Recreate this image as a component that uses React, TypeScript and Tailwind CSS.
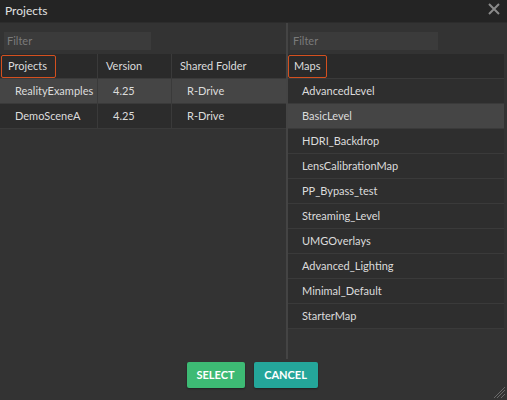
import React from 'react';

const projects = [
  { name: 'RealityExamples', version: '4.25', folder: 'R-Drive', selected: true },
  { name: 'DemoSceneA', version: '4.25', folder: 'R-Drive', selected: false },
];

const maps = [
  'AdvancedLevel',
  'BasicLevel',
  'HDRI_Backdrop',
  'LensCalibrationMap',
  'PP_Bypass_test',
  'Streaming_Level',
  'UMGOverlays',
  'Advanced_Lighting',
  'Minimal_Default',
  'StarterMap',
];

function FilterBox({ width }: { width: string }) {
  return (
    <div className={`${width} h-[18px] bg-[#3b3b3b] flex items-center px-[3px] text-[11px] text-[#7a7a7a]`}>
      Filter
    </div>
  );
}

export default function App() {
  return (
    <div className="w-[507px] h-[400px] bg-[#333333] flex flex-col font-['Lato',sans-serif] text-[11px] text-[#dcdcdc] overflow-hidden">
      {/* title bar */}
      <div className="h-[23px] bg-[#242424] border-b border-[#2c2c2c] flex items-center justify-between pl-[5px] pr-[6px] shrink-0">
        <span className="text-[12px] text-[#e2e2e2]">Projects</span>
        <svg width="14" height="14" viewBox="0 0 14 14" className="mt-[-4px]">
          <path d="M2 2 L12 12 M12 2 L2 12" stroke="#8a8a8a" strokeWidth="2" />
        </svg>
      </div>

      <div className="flex h-[336px] shrink-0">
        {/* projects panel */}
        <div className="w-[288px] border-r-2 border-[#444444] flex flex-col pt-[9px]">
          <div className="pl-[4px]">
            <FilterBox width="w-[147px]" />
          </div>
          <div className="mt-[4px] h-[25px] bg-[#2a2a2a] flex border-b border-[#3a3a3a]">
            <div className="w-[98px] border-r border-[#3a3a3a] flex items-center pl-[1px]">
              <div className="h-[23px] w-[55px] border border-[#d4501f] rounded-[2px] flex items-center pl-[6px]">
                Projects
              </div>
            </div>
            <div className="w-[74px] border-r border-[#3a3a3a] flex items-center pl-[8px]">Version</div>
            <div className="flex-1 flex items-center pl-[8px]">Shared Folder</div>
          </div>
          {projects.map((p) => (
            <div
              key={p.name}
              className={`h-[25px] flex border-b border-[#3a3a3a] ${p.selected ? 'bg-[#454545]' : 'bg-[#2c2c2c]'}`}
            >
              <div className="w-[98px] border-r border-[#3a3a3a] flex items-center pl-[15px]">{p.name}</div>
              <div className="w-[74px] border-r border-[#3a3a3a] flex items-center pl-[15px]">{p.version}</div>
              <div className="flex-1 flex items-center pl-[15px]">{p.folder}</div>
            </div>
          ))}
        </div>

        {/* maps panel */}
        <div className="flex-1 flex flex-col pt-[9px] pr-[3px]">
          <div className="pl-[2px]">
            <FilterBox width="w-[148px]" />
          </div>
          <div className="mt-[4px] h-[25px] bg-[#2a2a2a] flex items-center border-b border-[#3a3a3a]">
            <div className="h-[23px] w-[39px] border border-[#d4501f] rounded-[2px] flex items-center pl-[5px]">
              Maps
            </div>
          </div>
          {maps.map((m) => (
            <div
              key={m}
              className={`h-[25px] flex items-center pl-[14px] border-b border-[#3a3a3a] ${m === 'BasicLevel' ? 'bg-[#454545]' : 'bg-[#2e2e2e]'}`}
            >
              {m}
            </div>
          ))}
        </div>
      </div>

      {/* footer */}
      <div className="flex-1 relative flex justify-center items-start pt-[3px] pr-[3px] gap-[9px]">
        <button className="w-[58px] h-[26px] bg-[#3dba74] rounded-[2px] text-white text-[11px] font-bold shadow-[0_1px_2px_rgba(0,0,0,0.4)]">
          SELECT
        </button>
        <button className="w-[64px] h-[26px] bg-[#24a69a] rounded-[2px] text-white text-[11px] font-bold shadow-[0_1px_2px_rgba(0,0,0,0.4)]">
          CANCEL
        </button>
        <svg width="12" height="12" viewBox="0 0 12 12" className="absolute right-[1px] bottom-[1px]">
          <path d="M11 3 L3 11 M11 7 L7 11 M11 0 L0 11" stroke="#6a6a6a" strokeWidth="1" />
        </svg>
      </div>
    </div>
  );
}
